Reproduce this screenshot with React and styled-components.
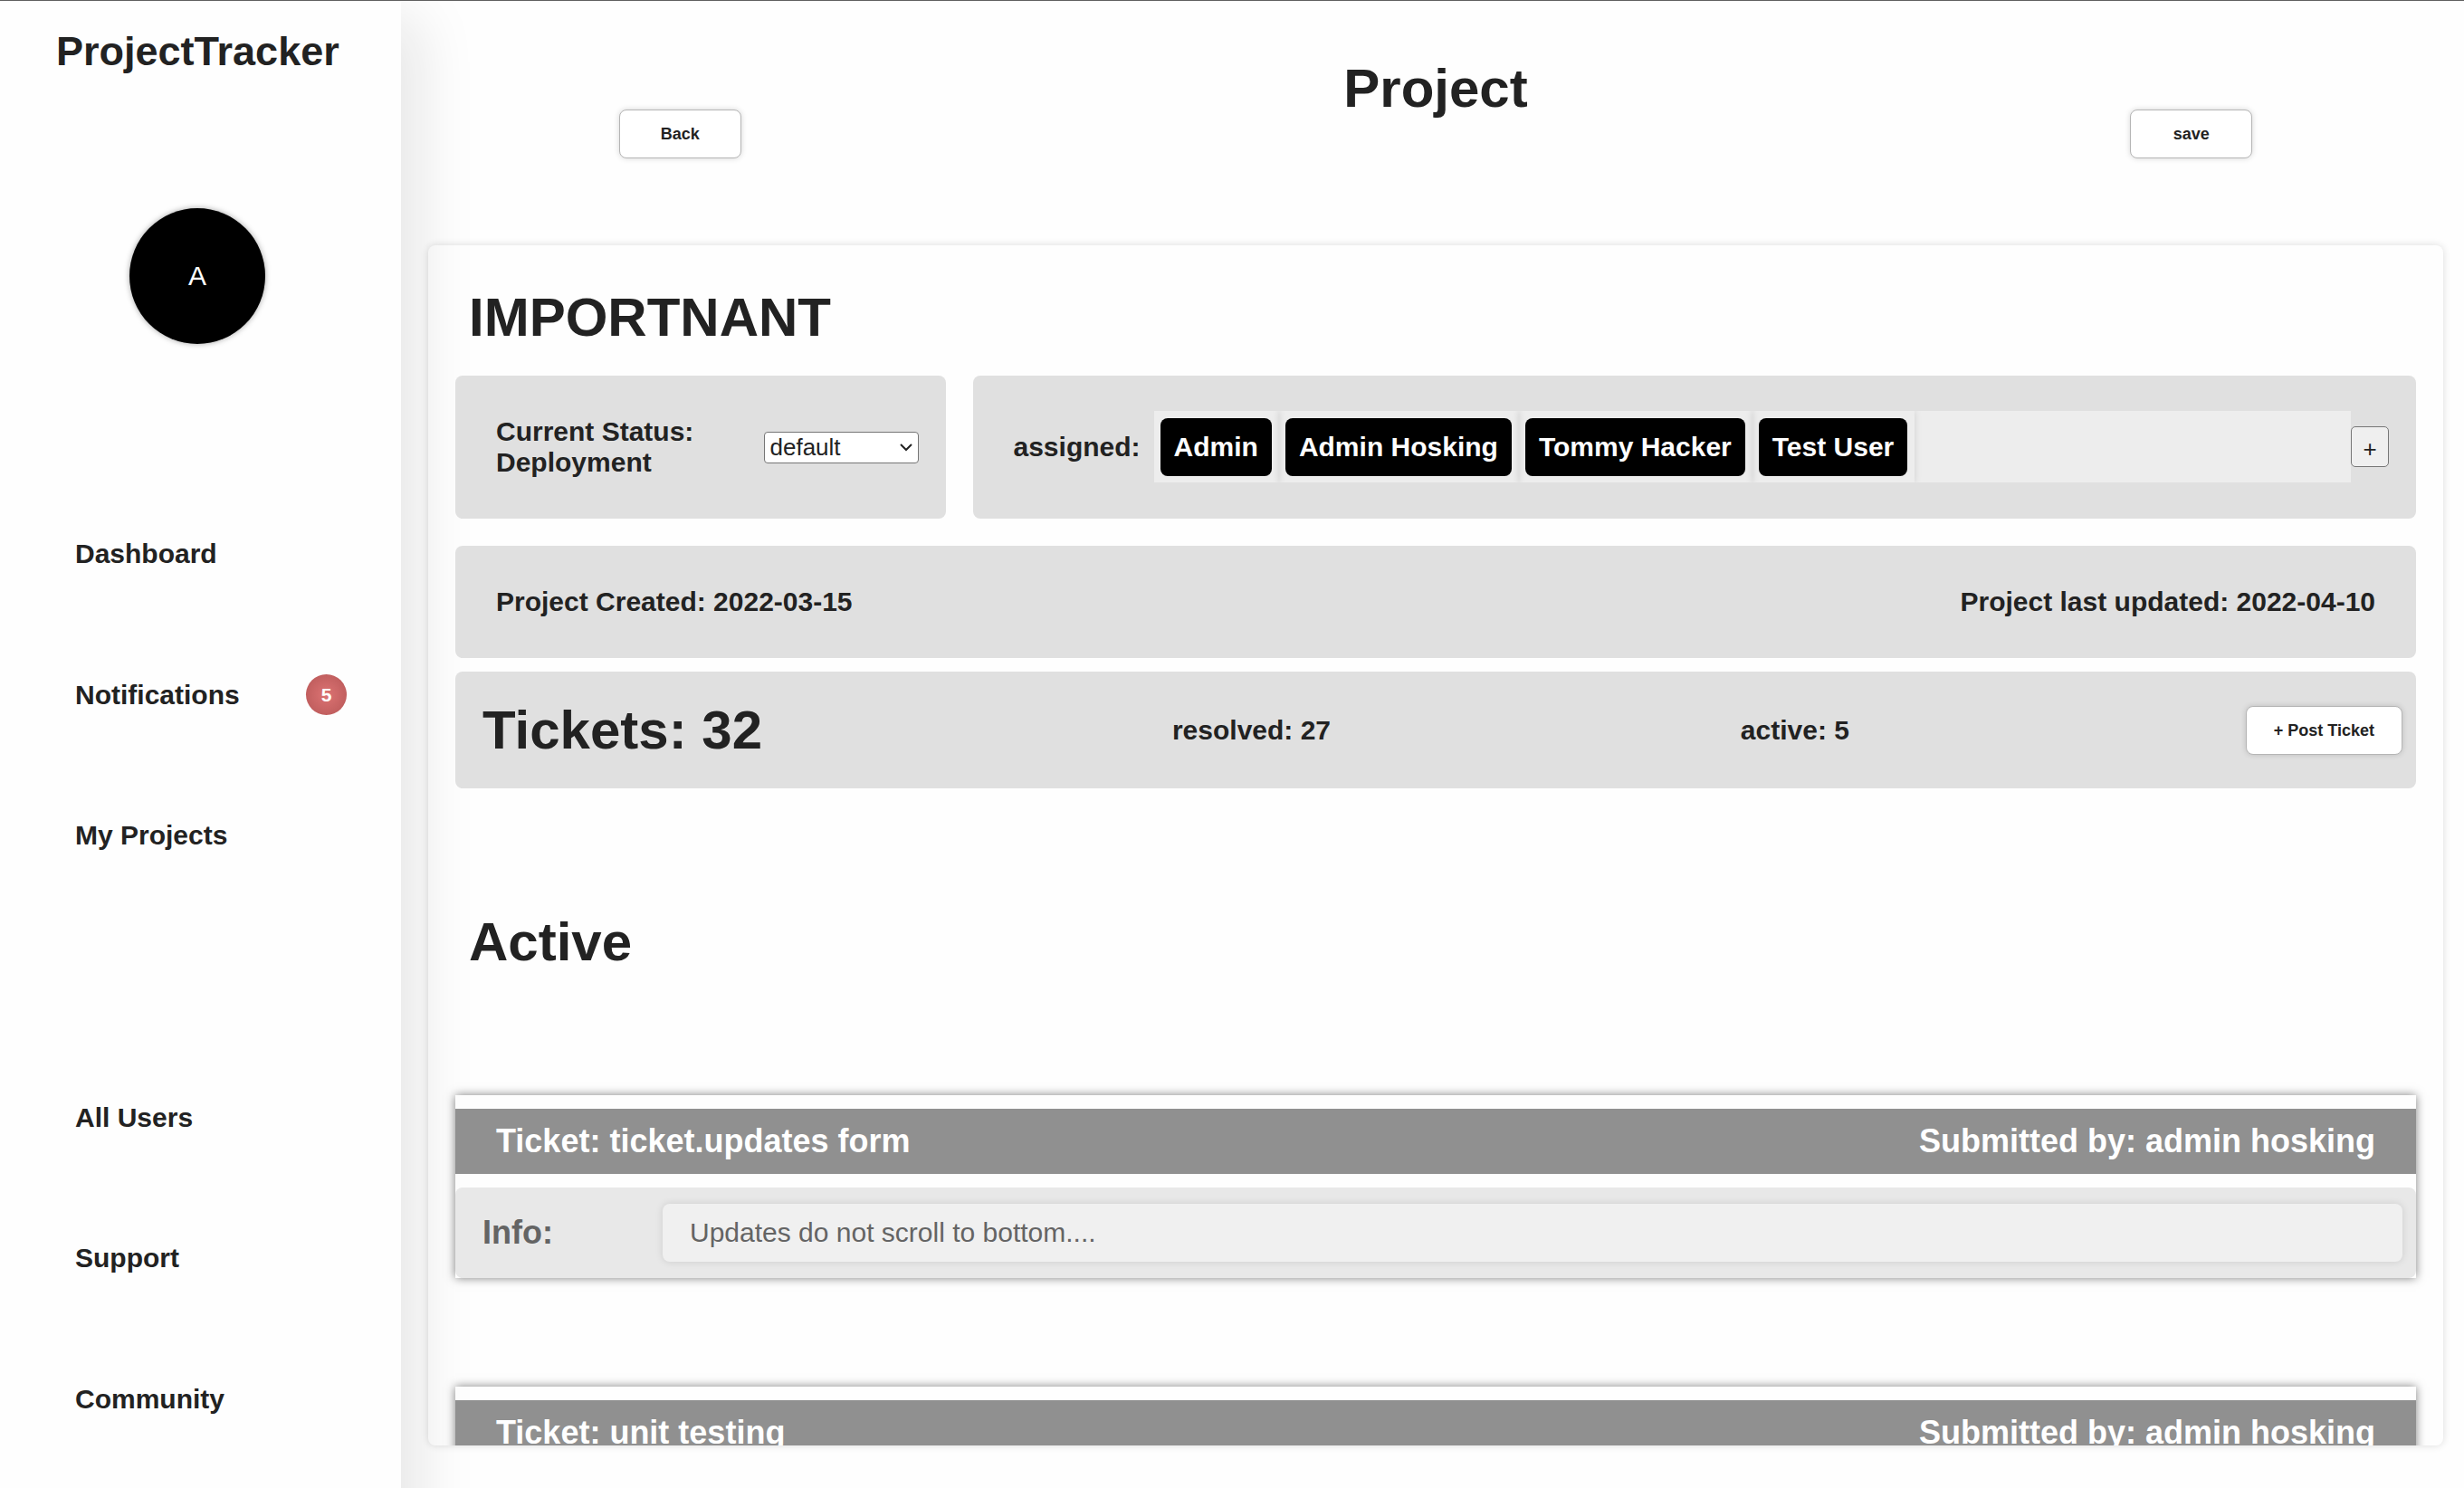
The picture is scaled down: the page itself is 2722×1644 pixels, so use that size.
import React, { useState } from "react";
import styled, { createGlobalStyle } from "styled-components";

const ink = "#222222";

const GlobalStyle = createGlobalStyle`
  *, *::before, *::after { box-sizing: border-box; }
  body {
    margin: 0;
    background: #fefefe;
    color: ${ink};
    font-family: Arial, "Liberation Sans", sans-serif;
    font-size: 30px;
    line-height: 34px;
  }
  h1, h2, h3, h4, p, ul { margin: 0; padding: 0; }
`;

const Shell = styled.div`
  display: flex;
  height: 100vh;
  overflow: hidden;
  border-top: 1px solid #5f5f5f;
`;

/* The sidebar runs past the bottom edge so its shadow does not fade out there. */
const Sidebar = styled.aside`
  display: flex;
  flex-direction: column;
  flex: 0 0 443px;
  margin-bottom: -60px;
  padding-bottom: 80px;
  background: #fefefe;
  box-shadow: 20px 20px 60px #e6e6e6;
`;

const Brand = styled.h2`
  padding: 30px 62px;
  font-size: 45px;
  line-height: 52px;
`;

const Avatar = styled.div`
  display: flex;
  align-items: center;
  justify-content: center;
  width: 150px;
  height: 150px;
  margin: 117px 0 154px 143px;
  border-radius: 50%;
  background: #000;
  color: #fff;
  box-shadow: 0 0 6px rgba(0, 0, 0, 0.35);
`;

const Nav = styled.nav`
  flex: 1;
  display: grid;
  grid-template-rows: repeat(7, 1fr);
  padding: 0 60px 0 83px;
`;

const NavItem = styled.div`
  display: flex;
  align-items: center;
  justify-content: space-between;
`;

const NavLink = styled.a`
  color: inherit;
  font-weight: 700;
  text-decoration: none;
`;

const Badge = styled.span`
  display: flex;
  align-items: center;
  justify-content: center;
  width: 45px;
  height: 45px;
  border-radius: 50%;
  background: radial-gradient(circle, #dc7373, #b65656);
  color: #fff;
  font-size: 21px;
  font-weight: 700;
`;

const Main = styled.main`
  flex: 1;
  min-width: 0;
  display: flex;
  flex-direction: column;
  padding: 0 23px 47px 30px;
`;

const Header = styled.header`
  display: grid;
  grid-template-columns: 1fr 2fr 1fr;
  justify-items: center;
  align-items: start;
  padding: 63px 0 96px;
`;

const Title = styled.h1`
  font-size: 60px;
  line-height: 68px;
`;

const HeaderAction = styled.div`
  display: flex;
  padding-top: 57px;
`;

const Button = styled.button`
  min-width: 135px;
  height: 54px;
  padding: 0 30px;
  border: 1px solid #b5b5b5;
  border-radius: 8px;
  background: #fff;
  color: ${ink};
  font: 700 18px/20px Arial, "Liberation Sans", sans-serif;
  box-shadow: 0 0 6px rgba(0, 0, 0, 0.16);
`;

const Card = styled.section`
  flex: 1;
  min-height: 0;
  overflow: auto;
  scrollbar-width: none;
  padding: 46px 30px 0;
  border-radius: 8px;
  box-shadow: 0 0 8px rgba(0, 0, 0, 0.14);
`;

const SectionTitle = styled(Title)`
  padding-left: 15px;
`;

const Panel = styled.div`
  display: flex;
  align-items: center;
  justify-content: space-between;
  border-radius: 8px;
  background: #e0e0e0;
  font-weight: 700;
`;

const TopRow = styled.div`
  display: flex;
  gap: 30px;
  margin: 30px 0;
`;

const StatusPanel = styled(Panel)`
  flex: 0 0 25%;
  padding: 45px 30px 45px 45px;
`;

const StatusLabel = styled.label`
  max-width: 260px;
`;

const SelectBox = styled.div`
  position: relative;
  display: flex;
`;

const StatusSelect = styled.select`
  appearance: none;
  width: 171px;
  height: 35px;
  padding: 0 30px 0 6px;
  border: 1px solid #767676;
  border-radius: 4px;
  background: #fff;
  color: ${ink};
  font: 26px Arial, "Liberation Sans", sans-serif;
`;

const Chevron = styled.svg`
  position: absolute;
  top: 13px;
  right: 7px;
  width: 14px;
  height: 9px;
  fill: none;
  stroke: ${ink};
  stroke-width: 2;
  pointer-events: none;
`;

const AssignedPanel = styled(Panel)`
  flex: 1;
  min-width: 0;
  padding: 39px 30px 40px 45px;
`;

const TagStrip = styled.ul`
  flex: 1;
  display: flex;
  margin-left: 15px;
  overflow: hidden;
  background: #ededed;
  list-style: none;
`;

const TagCell = styled.li`
  padding: 8px 8px 7px 7px;
  box-shadow: 0 0 8px rgba(0, 0, 0, 0.12);
`;

const Tag = styled.span`
  display: block;
  padding: 15px;
  border-radius: 8px;
  background: #000;
  color: #fff;
  white-space: nowrap;
`;

const AddButton = styled.button`
  width: 42px;
  height: 45px;
  padding: 6px 0 0;
  border: 1px solid #767676;
  border-radius: 5px;
  background: #efefef;
  color: ${ink};
  font: 26px Arial, "Liberation Sans", sans-serif;
`;

const DatesPanel = styled(Panel)`
  padding: 45px;
  margin-bottom: 15px;
`;

const CountsPanel = styled(Panel)`
  padding: 31px 15px 30px;
`;

const Count = styled.p`
  padding: 0 15px;
`;

const CountTitle = styled(Title)`
  padding: 0 15px;
`;

const ActiveTitle = styled(SectionTitle)`
  margin: 136px 0 135px;
`;

const TicketList = styled.div`
  display: flex;
  flex-direction: column;
  gap: 120px;
  padding-bottom: 60px;
`;

const Ticket = styled.article`
  padding-top: 15px;
  box-shadow: 0 0 10px rgba(0, 0, 0, 0.5);
`;

const TicketBar = styled.header`
  display: flex;
  justify-content: space-between;
  padding: 15px 45px;
  margin-bottom: 15px;
  background: #909090;
  color: #fff;
`;

const TicketHeading = styled.h3`
  font-size: 36px;
  line-height: 42px;
`;

const TicketInfo = styled.div`
  display: flex;
  align-items: center;
  padding: 18px 15px 18px 30px;
  border-radius: 8px;
  background: #e8e8e8;
  color: #646464;
`;

const InfoHeading = styled(TicketHeading)`
  flex: 0 0 199px;
`;

const InfoText = styled.p`
  flex: 1;
  padding: 15px 30px;
  border-radius: 8px;
  background: #f0f0f0;
  box-shadow: 0 0 8px rgba(0, 0, 0, 0.12);
`;

const navItems = [
  { label: "Dashboard" },
  { label: "Notifications", count: 5 },
  { label: "My Projects" },
  null,
  { label: "All Users" },
  { label: "Support" },
  { label: "Community" },
];

const members = ["Admin", "Admin Hosking", "Tommy Hacker", "Test User"];

const tickets = [
  { title: "ticket.updates form", by: "admin hosking", info: "Updates do not scroll to bottom...." },
  { title: "unit testing", by: "admin hosking" },
];

export default function App() {
  const [status, setStatus] = useState("default");

  return (
    <>
      <GlobalStyle />
      <Shell>
        <Sidebar>
          <Brand>ProjectTracker</Brand>
          <Avatar>A</Avatar>
          <Nav>
            {navItems.map((item, i) => (
              <NavItem key={i}>
                {item && <NavLink href="#">{item.label}</NavLink>}
                {item && item.count && <Badge>{item.count}</Badge>}
              </NavItem>
            ))}
          </Nav>
        </Sidebar>
        <Main>
          <Header>
            <HeaderAction>
              <Button type="button">Back</Button>
            </HeaderAction>
            <Title>Project</Title>
            <HeaderAction>
              <Button type="button">save</Button>
            </HeaderAction>
          </Header>
          <Card>
            <SectionTitle as="h2">IMPORTNANT</SectionTitle>
            <TopRow>
              <StatusPanel>
                <StatusLabel htmlFor="status">Current Status: Deployment</StatusLabel>
                <SelectBox>
                  <StatusSelect id="status" value={status} onChange={(e) => setStatus(e.target.value)}>
                    <option value="default">default</option>
                  </StatusSelect>
                  <Chevron viewBox="0 0 14 9" aria-hidden="true">
                    <path d="M1 1l6 6 6-6" />
                  </Chevron>
                </SelectBox>
              </StatusPanel>
              <AssignedPanel>
                <span>assigned:</span>
                <TagStrip>
                  {members.map((name) => (
                    <TagCell key={name}>
                      <Tag>{name}</Tag>
                    </TagCell>
                  ))}
                </TagStrip>
                <AddButton type="button">+</AddButton>
              </AssignedPanel>
            </TopRow>
            <DatesPanel>
              <p>Project Created: 2022-03-15</p>
              <p>Project last updated: 2022-04-10</p>
            </DatesPanel>
            <CountsPanel>
              <CountTitle as="h2">Tickets: 32</CountTitle>
              <Count>resolved: 27</Count>
              <Count>active: 5</Count>
              <Button type="button">+ Post Ticket</Button>
            </CountsPanel>
            <ActiveTitle as="h2">Active</ActiveTitle>
            <TicketList>
              {tickets.map((t) => (
                <Ticket key={t.title}>
                  <TicketBar>
                    <TicketHeading>Ticket: {t.title}</TicketHeading>
                    <TicketHeading>Submitted by: {t.by}</TicketHeading>
                  </TicketBar>
                  {t.info && (
                    <TicketInfo>
                      <InfoHeading as="h4">Info:</InfoHeading>
                      <InfoText>{t.info}</InfoText>
                    </TicketInfo>
                  )}
                </Ticket>
              ))}
            </TicketList>
          </Card>
        </Main>
      </Shell>
    </>
  );
}
